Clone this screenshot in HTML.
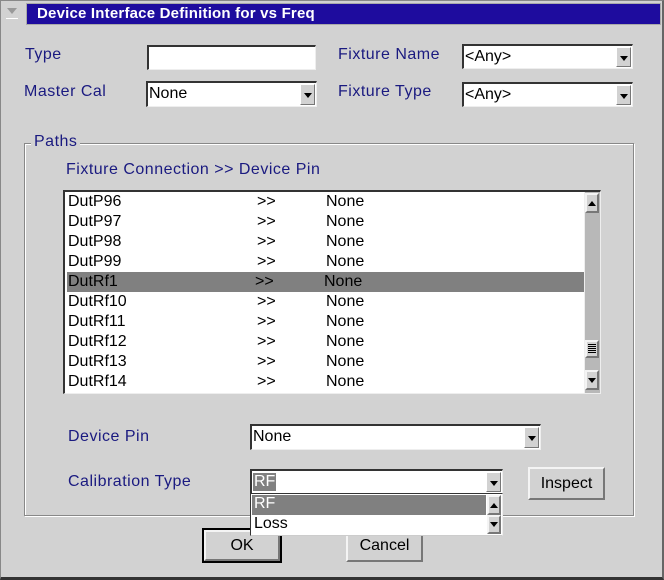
<!DOCTYPE html>
<html><head><style>
*{box-sizing:border-box;margin:0;padding:0}
body{width:664px;height:580px;background:#d2d2d2;font-family:"Liberation Sans",sans-serif;font-size:16px;position:relative;overflow:hidden}
.a{position:absolute}
.lbl{position:absolute;color:#1a1a80;font-size:16px;letter-spacing:0.5px}
.in{position:absolute;background:#fff;border-top:2px solid #333;border-left:2px solid #333;border-right:1px solid #eee;border-bottom:1px solid #eee}
.in span{position:absolute;left:1px;top:2px;color:#000;font-size:16px}
.arr{position:absolute;right:1px;top:1px;bottom:1px;width:15px;background:#d2d2d2;border:1px solid #fff;border-right-color:#777;border-bottom-color:#777}
.arr:after{content:"";position:absolute;left:3px;top:8px;border-left:4px solid transparent;border-right:4px solid transparent;border-top:5px solid #000}
.btn{position:absolute;background:#d2d2d2;border:2px solid #f4f4f4;border-right-color:#777;border-bottom-color:#777;text-align:center;font-size:16px;color:#000}
.row{position:absolute;left:2px;width:517px;height:20px;color:#000}
.row span{position:absolute;top:1px}
</style></head><body>
<div class="a" style="left:0;top:0;width:664px;height:580px;border:1px solid #888;border-right:2px solid #666;border-bottom:3px solid #333"></div>
<div class="a" style="left:6px;top:7px;width:12px;height:12px;border-bottom:1px solid #fff"></div>
<div class="a" style="left:7px;top:8px;border-left:5px solid transparent;border-right:5px solid transparent;border-top:6px solid #999"></div>
<div class="a" style="left:26px;top:3px;width:635px;height:22px;background:#1e0c9e;border:1px solid #aaa"></div>
<div class="a" style="left:37px;top:5px;color:#fff;font-size:15px;font-weight:bold;letter-spacing:0.2px">Device Interface Definition for vs Freq</div>

<div class="lbl" style="left:25px;top:46px">Type</div>
<div class="in" style="left:147px;top:45px;width:169px;height:25px"></div>
<div class="lbl" style="left:24px;top:83px">Master Cal</div>
<div class="in" style="left:146px;top:81px;width:171px;height:26px"><span>None</span><div class="arr"></div></div>

<div class="lbl" style="left:338px;top:46px">Fixture Name</div>
<div class="in" style="left:462px;top:44px;width:171px;height:25px"><span>&lt;Any&gt;</span><div class="arr"></div></div>
<div class="lbl" style="left:338px;top:83px">Fixture Type</div>
<div class="in" style="left:462px;top:82px;width:171px;height:25px"><span>&lt;Any&gt;</span><div class="arr"></div></div>

<div class="a" style="left:24px;top:143px;width:610px;height:373px;border:1px solid #888;box-shadow:1px 1px 0 #fff inset,1px 1px 0 #fff"></div>
<div class="lbl" style="left:31px;top:133px;background:#d2d2d2;padding:0 3px">Paths</div>
<div class="lbl" style="left:66px;top:161px">Fixture Connection &gt;&gt; Device Pin</div>

<div class="in" style="left:63px;top:190px;width:538px;height:204px;overflow:hidden">
<div class="row" style="top:0"><span style="left:1px">DutP96</span><span style="left:190px">&gt;&gt;</span><span style="left:259px">None</span></div>
<div class="row" style="top:20px"><span style="left:1px">DutP97</span><span style="left:190px">&gt;&gt;</span><span style="left:259px">None</span></div>
<div class="row" style="top:40px"><span style="left:1px">DutP98</span><span style="left:190px">&gt;&gt;</span><span style="left:259px">None</span></div>
<div class="row" style="top:60px"><span style="left:1px">DutP99</span><span style="left:190px">&gt;&gt;</span><span style="left:259px">None</span></div>
<div class="row" style="top:80px;background:#808080;color:#fff"><span style="left:1px">DutRf1</span><span style="left:188px">&gt;&gt;</span><span style="left:257px">None</span></div>
<div class="row" style="top:100px"><span style="left:1px">DutRf10</span><span style="left:190px">&gt;&gt;</span><span style="left:259px">None</span></div>
<div class="row" style="top:120px"><span style="left:1px">DutRf11</span><span style="left:190px">&gt;&gt;</span><span style="left:259px">None</span></div>
<div class="row" style="top:140px"><span style="left:1px">DutRf12</span><span style="left:190px">&gt;&gt;</span><span style="left:259px">None</span></div>
<div class="row" style="top:160px"><span style="left:1px">DutRf13</span><span style="left:190px">&gt;&gt;</span><span style="left:259px">None</span></div>
<div class="row" style="top:180px"><span style="left:1px">DutRf14</span><span style="left:190px">&gt;&gt;</span><span style="left:259px">None</span></div>
<div class="a" style="left:519px;top:0;width:16px;height:202px;background:#b8b8b8;border-left:1px solid #eee"></div>
<div class="btn" style="left:520px;top:1px;width:14px;height:20px"></div>
<div class="a" style="left:523px;top:9px;border-left:4px solid transparent;border-right:4px solid transparent;border-bottom:5px solid #000"></div>
<div class="btn" style="left:520px;top:148px;width:14px;height:18px"></div>
<div class="a" style="left:523px;top:152px;width:8px;height:10px;background:repeating-linear-gradient(#000 0 1px,transparent 1px 2px)"></div>
<div class="btn" style="left:520px;top:178px;width:14px;height:20px"></div>
<div class="a" style="left:523px;top:186px;border-left:4px solid transparent;border-right:4px solid transparent;border-top:5px solid #000"></div>
</div>

<div class="lbl" style="left:68px;top:428px">Device Pin</div>
<div class="in" style="left:250px;top:424px;width:291px;height:26px"><span>None</span><div class="arr"></div></div>

<div class="lbl" style="left:68px;top:473px">Calibration Type</div>
<div class="in" style="left:250px;top:469px;width:253px;height:25px"><span style="background:#808080;color:#fff;padding:0 1px">RF</span><div class="arr"></div></div>

<div class="btn" style="left:528px;top:467px;width:77px;height:33px;line-height:29px">Inspect</div>

<div class="a" style="left:202px;top:528px;width:80px;height:35px;border:2px solid #000"></div>
<div class="btn" style="left:204px;top:530px;width:76px;height:31px;line-height:27px">OK</div>
<div class="btn" style="left:346px;top:529px;width:77px;height:33px;line-height:29px">Cancel</div>

<div class="a" style="left:250px;top:493px;width:253px;height:43px;background:#fff;border:1px solid #333;border-right:1px solid #eee;border-bottom:1px solid #ccc">
<div class="a" style="left:1px;top:1px;width:234px;height:20px;background:#808080;color:#fff;padding-left:2px">RF</div>
<div class="a" style="left:3px;top:21px;color:#000">Loss</div>
<div class="btn" style="left:236px;top:1px;width:14px;height:20px"></div>
<div class="a" style="left:239px;top:9px;border-left:4px solid transparent;border-right:4px solid transparent;border-bottom:5px solid #000"></div>
<div class="btn" style="left:236px;top:21px;width:14px;height:19px"></div>
<div class="a" style="left:239px;top:28px;border-left:4px solid transparent;border-right:4px solid transparent;border-top:5px solid #000"></div>
</div>
</body></html>
